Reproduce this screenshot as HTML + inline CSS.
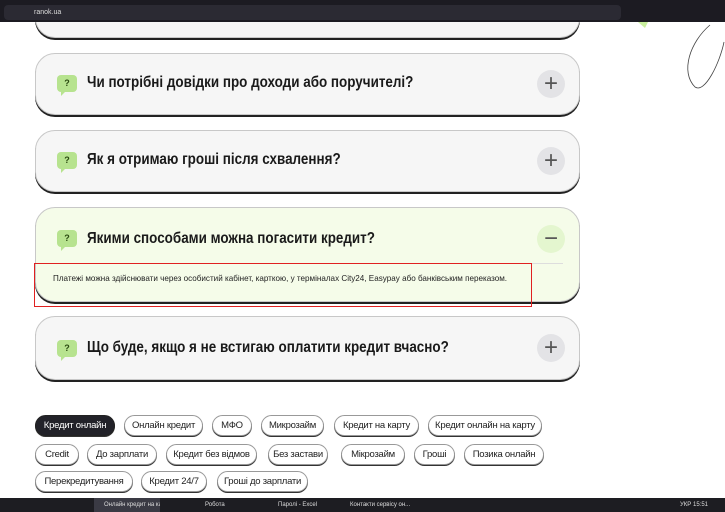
<!DOCTYPE html>
<html><head><meta charset="utf-8"><style>
*{box-sizing:border-box;margin:0;padding:0}
body{width:725px;height:512px;overflow:hidden;background:#fff;font-family:"Liberation Sans","DejaVu Sans",sans-serif;position:relative}
.top{position:absolute;left:0;top:0;width:725px;height:22px;background:#1c1b22;z-index:5}
.url{position:absolute;left:4px;top:5px;width:617px;height:15px;background:#2b2a33;border-radius:4px;color:#ddd;font-size:7px;line-height:15px;padding-left:30px}
.card{position:absolute;left:35px;width:545px;border:1px solid #c8c8c8;border-radius:20px;background:#f6f6f6;box-shadow:0 2px 0 #222}
.card .q{position:absolute;left:21px;width:20px;height:17px;background:#b7e38f;border-radius:4px;color:#2a4a10;font-size:9px;font-weight:bold;text-align:center;line-height:17px}
.card .q:after{content:"";position:absolute;left:4px;bottom:-4px;border-left:4px solid #b7e38f;border-bottom:4px solid transparent}
.card .t{position:absolute;left:51px;font-size:16px;font-weight:bold;color:#1a1a1a;white-space:nowrap;transform:scaleX(0.84);transform-origin:0 0}
.card .pl{position:absolute;left:501px;width:28px;height:28px;border-radius:50%;background:#e3e3e6;color:#555;font-size:24px;text-align:center;line-height:27px}
.pill{position:absolute;height:21px;border:1px solid #999;border-radius:11px;box-shadow:0 1px 0 #333;font-size:9.5px;color:#222;text-align:center;line-height:19px;background:#fff;white-space:nowrap;letter-spacing:-0.25px;overflow:hidden}
.tb{position:absolute;left:0;top:498px;width:725px;height:14px;background:#1d1d22;color:#ddd;font-size:6px;line-height:14px;white-space:nowrap;overflow:hidden}
.tb span{overflow:hidden}
</style></head><body>
<div class="top"><div class="url">ranok.ua</div></div>
<svg style="position:absolute;left:620px;top:22px" width="105" height="75"><path d="M90 3 C70 20 60 50 75 65 C85 72 100 40 104 20" fill="none" stroke="#444" stroke-width="0.8"/><path d="M18 0 L28 0 L25 6 Z" fill="#c9ef9e"/></svg>
<div class="card" style="top:-20px;height:58px"></div>
<div class="card" style="top:53px;height:62px"><div class="q" style="top:21px">?</div><div class="t" style="top:20px">Чи потрібні довідки про доходи або поручителі?</div><div class="pl" style="top:16px">+</div></div>
<div class="card" style="top:130px;height:62px"><div class="q" style="top:21px">?</div><div class="t" style="top:20px">Як я отримаю гроші після схвалення?</div><div class="pl" style="top:16px">+</div></div>
<div class="card" style="top:207px;height:95px;background:#f5fce9"><div class="q" style="top:22px">?</div><div class="t" style="top:22px">Якими способами можна погасити кредит?</div><div class="pl" style="top:17px;background:#e4f6cf">−</div>
<div style="position:absolute;left:0;right:16px;top:55px;border-top:1px solid #ddd"></div>
<div style="position:absolute;left:17px;top:66px;font-size:8.1px;color:#222;white-space:nowrap">Платежі можна здійснювати через особистий кабінет, карткою, у терміналах City24, Easypay або банківським переказом.</div></div>
<div style="position:absolute;left:34px;top:263px;width:498px;height:44px;border:1.5px solid #e02020"></div>
<div class="card" style="top:316px;height:64px"><div class="q" style="top:23px">?</div><div class="t" style="top:22px">Що буде, якщо я не встигаю оплатити кредит вчасно?</div><div class="pl" style="top:17px">+</div></div>
<div class="pill" style="left:35px;top:415px;width:80px;background:#222229;color:#fff;border-color:#222">Кредит онлайн</div>
<div class="pill" style="left:124px;top:415px;width:79px">Онлайн кредит</div>
<div class="pill" style="left:212px;top:415px;width:40px">МФО</div>
<div class="pill" style="left:261px;top:415px;width:63px">Микрозайм</div>
<div class="pill" style="left:334px;top:415px;width:85px">Кредит на карту</div>
<div class="pill" style="left:428px;top:415px;width:114px">Кредит онлайн на карту</div>
<div class="pill" style="left:35px;top:444px;width:44px">Credit</div>
<div class="pill" style="left:87px;top:444px;width:70px">До зарплати</div>
<div class="pill" style="left:166px;top:444px;width:91px">Кредит без відмов</div>
<div class="pill" style="left:268px;top:444px;width:60px">Без застави</div>
<div class="pill" style="left:341px;top:444px;width:64px">Мікрозайм</div>
<div class="pill" style="left:414px;top:444px;width:41px">Гроші</div>
<div class="pill" style="left:464px;top:444px;width:80px">Позика онлайн</div>
<div class="pill" style="left:35px;top:471px;width:98px">Перекредитування</div>
<div class="pill" style="left:141px;top:471px;width:66px">Кредит 24/7</div>
<div class="pill" style="left:217px;top:471px;width:91px">Гроші до зарплати</div>
<div class="tb"><span style="position:absolute;left:94px;width:66px;height:14px;background:#3a3a44;padding-left:10px">Онлайн кредит на ка...</span><span style="position:absolute;left:205px">Робота</span><span style="position:absolute;left:278px">Паролі - Excel</span><span style="position:absolute;left:350px">Контакти сервісу он...</span><span style="position:absolute;left:680px">УКР 15:51</span></div>
</body></html>
